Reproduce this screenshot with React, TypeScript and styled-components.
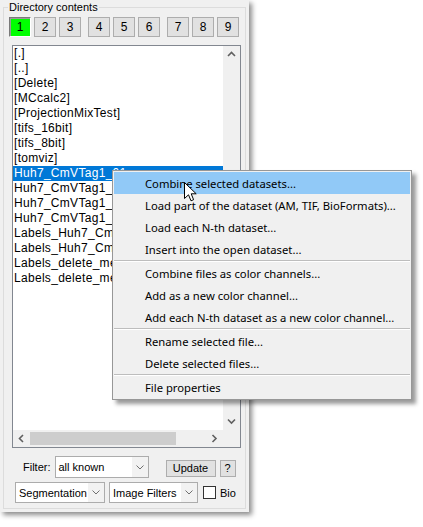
import React from 'react';
import styled, { createGlobalStyle } from 'styled-components';

const GlobalStyle = createGlobalStyle`
  html, body { margin: 0; padding: 0; background: #ffffff; }
  body {
    width: 423px;
    height: 527px;
    overflow: hidden;
    font-family: "Liberation Sans", Arial, sans-serif;
  }
  * { box-sizing: border-box; }
`;

const Stage = styled.div`
  position: relative;
  width: 423px;
  height: 527px;
  background: #ffffff;
`;

const Panel = styled.div`
  width: 249px;
  height: 512px;
  background: #f0f0f0;
  box-shadow: 3px 3px 5px rgba(0, 0, 0, 0.45);
  padding: 0 3px 3px 3px;
  display: flex;
`;

const Group = styled.fieldset`
  flex: 1;
  min-width: 0;
  margin: 0;
  border: 1px solid #dcdcdc;
  padding: 3px 4px 0 5px;
  display: flex;
  flex-direction: column;
`;

const Title = styled.legend`
  font: 11px "Liberation Sans", Arial, sans-serif;
  line-height: 14px;
  padding: 0 1px;
  margin-left: -1px;
  color: #000;
`;

const TabRow = styled.div`
  display: flex;
  gap: 7px;
`;

const TabGroup = styled.div`
  display: flex;
  gap: 3px;
`;

const TabButton = styled.button<{ $active?: boolean }>`
  width: 22px;
  height: 20px;
  padding: 0;
  margin: 0;
  font: 12px "Liberation Sans", Arial, sans-serif;
  color: #000;
  background: ${(p) => (p.$active ? '#00ff00' : '#e1e1e1')};
  border: 1px solid ${(p) => (p.$active ? '#ffffff' : '#adadad')};
  border-top-color: ${(p) => (p.$active ? '#7a7a7a' : '#adadad')};
  border-left-color: ${(p) => (p.$active ? '#7a7a7a' : '#adadad')};
  box-shadow: ${(p) => (p.$active ? 'inset 1px 1px 0 #9a9a9a' : 'none')};
`;

const ListBox = styled.div`
  margin: 8px 0 0 3px;
  height: 403px;
  border: 1px solid #828790;
  background: #ffffff;
  display: grid;
  grid-template-columns: 1fr 17px;
  grid-template-rows: 1fr 17px;
`;

const Items = styled.div`
  overflow: hidden;
  min-width: 0;
`;

const Item = styled.div<{ $selected?: boolean }>`
  height: 15px;
  padding-left: 1px;
  white-space: nowrap;
  font: 12px "Liberation Sans", Arial, sans-serif;
  line-height: 15px;
  letter-spacing: 0.3px;
  color: ${(p) => (p.$selected ? '#ffffff' : '#000000')};
  background: ${(p) => (p.$selected ? '#0078d7' : 'transparent')};
`;

const VScroll = styled.div`
  background: #f0f0f0;
  display: flex;
  flex-direction: column;
  justify-content: space-between;
`;

const HScroll = styled.div`
  background: #f0f0f0;
  display: flex;
`;

const ArrowBox = styled.div`
  width: 17px;
  height: 17px;
  flex: none;
  display: flex;
  align-items: center;
  justify-content: center;
`;

const Track = styled.div`
  flex: 1;
  display: flex;
  align-items: center;
`;

const Thumb = styled.div`
  width: 146px;
  height: 13px;
  background: #cdcdcd;
`;

const Corner = styled.div`
  background: #f0f0f0;
`;

const FilterRow = styled.div`
  display: flex;
  align-items: center;
  height: 22px;
  margin-top: 8px;
  padding-left: 14px;
`;

const ControlRow = styled.div`
  display: flex;
  align-items: center;
  height: 21px;
  margin-top: 4px;
  padding-left: 6px;
`;

const Label = styled.span<{ $gap?: number }>`
  font: 11px "Liberation Sans", Arial, sans-serif;
  color: #000;
  margin-left: ${(p) => p.$gap ?? 0}px;
`;

const Combo = styled.div<{ $w: number; $gap?: number }>`
  width: ${(p) => p.$w}px;
  height: 100%;
  margin-left: ${(p) => p.$gap ?? 0}px;
  display: flex;
  border: 1px solid #acacac;
  background: #ffffff;
`;

const ComboText = styled.span`
  flex: 1;
  display: flex;
  align-items: center;
  padding-left: 3px;
  font: 11px "Liberation Sans", Arial, sans-serif;
  color: #000;
  white-space: nowrap;
  overflow: hidden;
`;

const ComboArrow = styled.span`
  width: 16px;
  flex: none;
  display: flex;
  align-items: center;
  justify-content: center;
  background: #f2f2f2;
`;

const PushButton = styled.button<{ $w: number; $gap?: number }>`
  width: ${(p) => p.$w}px;
  height: 17px;
  margin: 2px 0 0 ${(p) => p.$gap ?? 0}px;
  padding: 0;
  font: 11px "Liberation Sans", Arial, sans-serif;
  color: #000;
  background: #e1e1e1;
  border: 1px solid #adadad;
  align-self: center;
`;

const CheckBox = styled.span`
  width: 13px;
  height: 13px;
  margin-left: 5px;
  border: 1px solid #333333;
  background: #ffffff;
  flex: none;
`;

const Menu = styled.div`
  position: absolute;
  left: 112px;
  top: 170px;
  width: 300px;
  padding: 1px;
  background: #f0f0f0;
  border: 1px solid #979797;
  box-shadow: 4px 4px 4px rgba(0, 0, 0, 0.4);
`;

const MenuItem = styled.div<{ $hover?: boolean }>`
  height: 22px;
  padding-left: 31px;
  display: flex;
  align-items: center;
  white-space: nowrap;
  font: 11.25px "Noto Sans", "Open Sans", sans-serif;
  color: #000;
  background: ${(p) => (p.$hover ? '#91c9f7' : 'transparent')};
`;

const MenuSep = styled.div`
  height: 2px;
  border-top: 1px solid #bdbdbd;
  border-bottom: 1px solid #ffffff;
`;

const Cursor = styled.svg`
  position: absolute;
  left: 184px;
  top: 182px;
`;

const Chevron = ({ dir }: { dir: 'up' | 'down' | 'left' | 'right' }) => {
  const pts = {
    up: '1,5 4.5,1.5 8,5',
    down: '1,1.5 4.5,5 8,1.5',
    left: '5,1 1.5,4.5 5,8',
    right: '1.5,1 5,4.5 1.5,8',
  }[dir];
  const vertical = dir === 'up' || dir === 'down';
  return (
    <svg width={vertical ? 9 : 7} height={vertical ? 7 : 9} viewBox={vertical ? '0 0 9 7' : '0 0 7 9'}>
      <polyline points={pts} fill="none" stroke="#606060" strokeWidth="1.6" />
    </svg>
  );
};

const ComboChevron = () => (
  <svg width="8" height="5" viewBox="0 0 8 5">
    <polyline points="0.5,0.5 4,4 7.5,0.5" fill="none" stroke="#707070" strokeWidth="1" />
  </svg>
);

const files = [
  '[.]',
  '[..]',
  '[Delete]',
  '[MCcalc2]',
  '[ProjectionMixTest]',
  '[tifs_16bit]',
  '[tifs_8bit]',
  '[tomviz]',
  'Huh7_CmVTag1_01.am',
  'Huh7_CmVTag1_02.am',
  'Huh7_CmVTag1_03.am',
  'Huh7_CmVTag1_04.am',
  'Labels_Huh7_CmVTag1_01.am',
  'Labels_Huh7_CmVTag1_02.am',
  'Labels_delete_me_01.am',
  'Labels_delete_me_02.am',
];

type Entry = { label: string; hover?: boolean } | 'sep';

const menu: Entry[] = [
  { label: 'Combine selected datasets...', hover: true },
  { label: 'Load part of the dataset (AM, TIF, BioFormats)...' },
  { label: 'Load each N-th dataset...' },
  { label: 'Insert into the open dataset...' },
  'sep',
  { label: 'Combine files as color channels...' },
  { label: 'Add as a new color channel...' },
  { label: 'Add each N-th dataset as a new color channel...' },
  'sep',
  { label: 'Rename selected file...' },
  { label: 'Delete selected files...' },
  'sep',
  { label: 'File properties' },
];

const groups = [
  ['1', '2', '3'],
  ['4', '5', '6'],
  ['7', '8', '9'],
];

export default function App() {
  return (
    <Stage>
      <GlobalStyle />
      <Panel>
        <Group>
          <Title>Directory contents</Title>
          <TabRow>
            {groups.map((g) => (
              <TabGroup key={g[0]}>
                {g.map((n) => (
                  <TabButton key={n} $active={n === '1'}>
                    {n}
                  </TabButton>
                ))}
              </TabGroup>
            ))}
          </TabRow>
          <ListBox>
            <Items>
              {files.map((f, i) => (
                <Item key={i} $selected={i === 8}>
                  {f}
                </Item>
              ))}
            </Items>
            <VScroll>
              <ArrowBox>
                <Chevron dir="up" />
              </ArrowBox>
              <ArrowBox>
                <Chevron dir="down" />
              </ArrowBox>
            </VScroll>
            <HScroll>
              <ArrowBox>
                <Chevron dir="left" />
              </ArrowBox>
              <Track>
                <Thumb />
              </Track>
              <ArrowBox>
                <Chevron dir="right" />
              </ArrowBox>
            </HScroll>
            <Corner />
          </ListBox>
          <FilterRow>
            <Label>Filter:</Label>
            <Combo $w={94} $gap={4}>
              <ComboText>all known</ComboText>
              <ComboArrow>
                <ComboChevron />
              </ComboArrow>
            </Combo>
            <PushButton $w={50} $gap={17}>
              Update
            </PushButton>
            <PushButton $w={16} $gap={4}>
              ?
            </PushButton>
          </FilterRow>
          <ControlRow>
            <Combo $w={90}>
              <ComboText>Segmentation</ComboText>
              <ComboArrow>
                <ComboChevron />
              </ComboArrow>
            </Combo>
            <Combo $w={89} $gap={4}>
              <ComboText>Image Filters</ComboText>
              <ComboArrow>
                <ComboChevron />
              </ComboArrow>
            </Combo>
            <CheckBox />
            <Label $gap={4}>Bio</Label>
          </ControlRow>
        </Group>
      </Panel>
      <Menu>
        {menu.map((m, i) =>
          m === 'sep' ? (
            <MenuSep key={i} />
          ) : (
            <MenuItem key={i} $hover={m.hover}>
              {m.label}
            </MenuItem>
          )
        )}
      </Menu>
      <Cursor width="13" height="20" viewBox="0 0 13 20">
        <path
          d="M0.5 0.5 L0.5 16.5 L4.5 12.8 L7 18.8 L9.6 17.7 L7.2 11.8 L12.2 11.8 Z"
          fill="#ffffff"
          stroke="#000000"
          strokeWidth="1"
          strokeLinejoin="miter"
        />
      </Cursor>
    </Stage>
  );
}
